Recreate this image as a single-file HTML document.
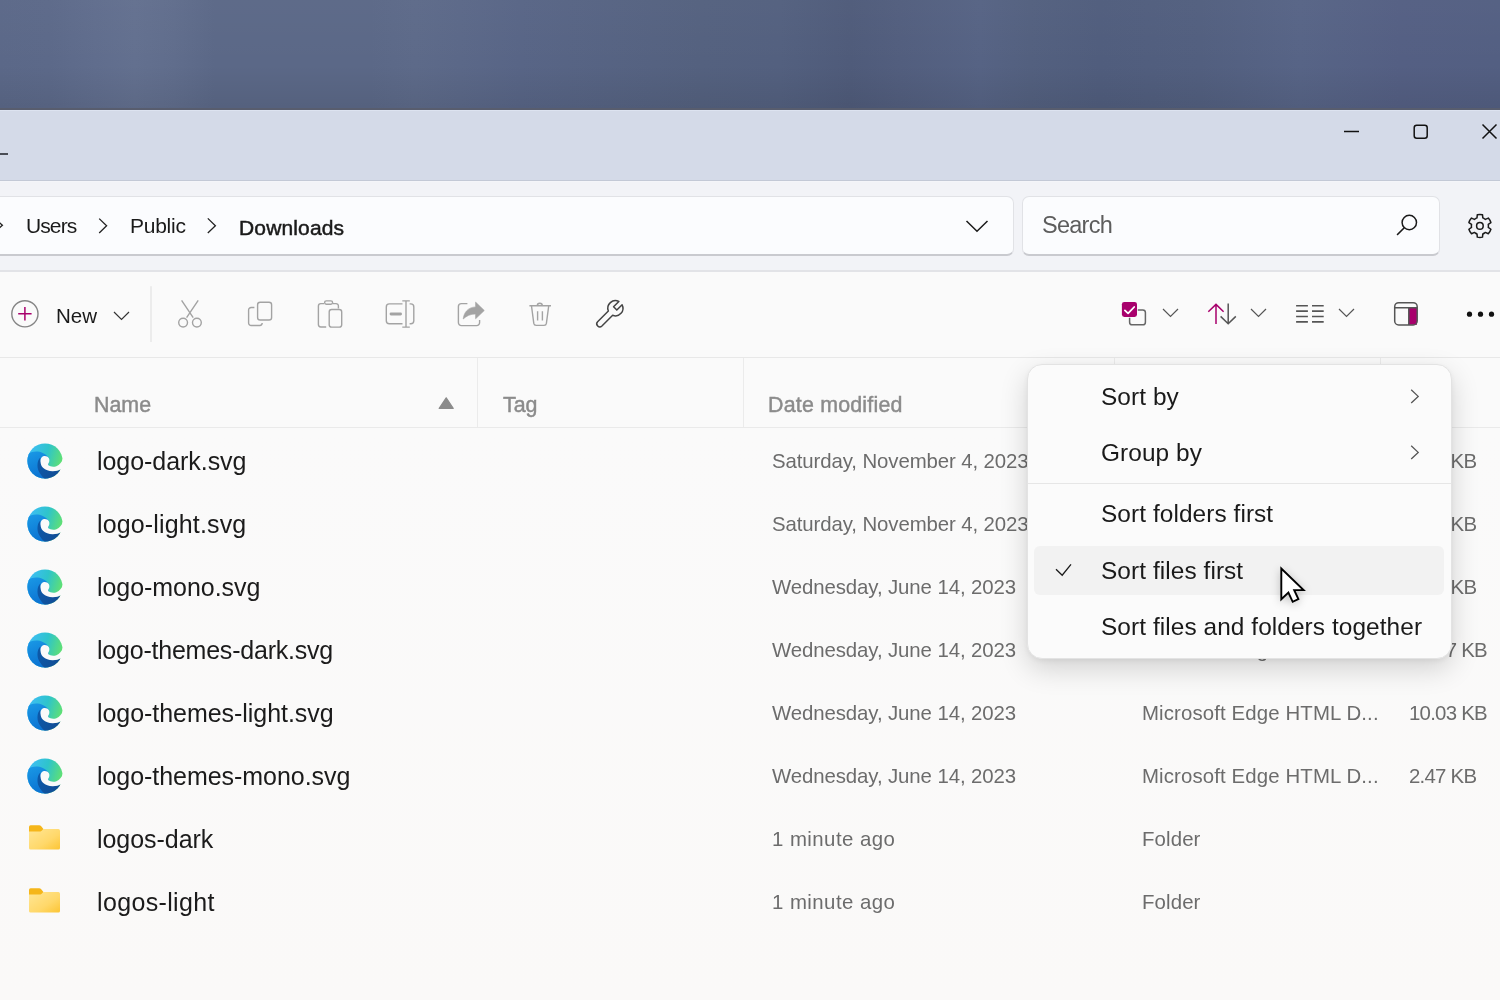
<!DOCTYPE html>
<html><head><meta charset="utf-8">
<style>
*{margin:0;padding:0;box-sizing:border-box}
html,body{width:1500px;height:1000px;overflow:hidden;background:#faf9f8;font-family:"Liberation Sans",sans-serif}
body{position:relative}
.a{position:absolute}
.t{position:absolute;white-space:nowrap;line-height:1;will-change:transform}
svg{position:absolute;overflow:visible}
#wall{left:0;top:0;width:1500px;height:108px;background:linear-gradient(90deg,#5b6888 0.00%,#5c6989 3.33%,#606d8d 6.33%,#63708f 9.00%,#606d8c 11.67%,#5b6887 14.33%,#5b6887 24.67%,#5d6a89 27.67%,#5b6888 30.67%,#586586 34.67%,#54617f 46.67%,#53607f 52.00%,#4f5b7a 56.67%,#525e7e 60.00%,#566384 65.33%,#53607f 68.67%,#505d7d 73.33%,#525f7f 80.00%,#576486 86.67%,#545f83 93.33%,#535f82 100.00%)}
#wallshade{left:0;top:0;width:1500px;height:108px;background:linear-gradient(180deg,rgba(255,255,255,0.02) 0%,rgba(0,0,0,0) 60%,rgba(0,0,0,0.07) 100%)}
#wb{left:0;top:108px;width:1500px;height:2px;background:#585d6e}
#title{left:0;top:110px;width:1500px;height:71px;background:#d4dae8;border-top:1px solid #dde3f0;border-bottom:1px solid #c3c9d6}
#addr{left:0;top:181px;width:1500px;height:91px;background:#f2f3f7;border-top:1px solid #f4f5f9;border-bottom:2px solid #e2e3e7}
#tool{left:0;top:272px;width:1500px;height:86px;background:#fafafa;border-bottom:1px solid #e8e8e8}
#head{left:0;top:358px;width:1500px;height:70px;background:#fafafa;border-bottom:1px solid #eaeaea}
#list{left:0;top:428px;width:1500px;height:572px;background:linear-gradient(180deg,#fafafa 0%,#faf9f8 100%)}
.box{background:#fbfcfe;border:1px solid #e1e2e6;border-bottom:2px solid #c9cacf;border-radius:7px}
.bc{font-size:21px;color:#1a1a1a;letter-spacing:-0.9px}
.nm{font-size:25px;color:#1b1b1b;letter-spacing:-0.05px}
.gr{font-size:20.4px;color:#6c6c6c;letter-spacing:-0.1px}
.hd{font-size:21.4px;color:#8b8b8b;-webkit-text-stroke:0.45px #8b8b8b;letter-spacing:0px}
.ty{letter-spacing:0.12px}
.mi{font-size:24.4px;color:#1a1a1a;letter-spacing:0.08px}
</style></head><body>
<div class="a" id="wall"></div>
<div class="a" id="wallshade"></div>
<div class="a" id="wb"></div>
<div class="a" id="title"></div>
<div class="a" id="addr"></div>
<div class="a" id="tool"></div>
<div class="a" id="head"></div>
<div class="a" id="list"></div>

<!-- title bar -->
<div class="a" style="left:0;top:153px;width:7.5px;height:2px;background:#4a4d55"></div>
<svg style="left:1340px;top:120px" width="160" height="24" viewBox="1340 120 160 24">
  <path d="M1344 131.5H1359" stroke="#111" stroke-width="1.5" fill="none"/>
  <rect x="1414.2" y="125.2" width="13" height="13" rx="2.5" stroke="#111" stroke-width="1.5" fill="none"/>
  <path d="M1482.5 124.5L1496.5 138.5M1496.5 124.5L1482.5 138.5" stroke="#111" stroke-width="1.5" fill="none"/>
</svg>

<!-- address box -->
<div class="a box" style="left:-10px;top:196px;width:1023.5px;height:60px"></div>
<div class="a box" style="left:1021.5px;top:196px;width:418.5px;height:60px"></div>

<!-- breadcrumb -->
<svg style="left:0;top:215px" width="20" height="20" viewBox="0 215 20 20"><path d="M-3 220.5L2.4 225.2L-3 230" stroke="#222" stroke-width="1.3" fill="none"/></svg>
<div class="t bc" style="left:25.5px;top:215.2px">Users</div>
<svg style="left:95px;top:215px" width="20" height="22" viewBox="95 215 20 22"><path d="M99.2 218.6L106.6 225.8L99.2 233" stroke="#222" stroke-width="1.3" fill="none"/></svg>
<div class="t bc" style="left:129.5px;top:215.2px;letter-spacing:-0.25px">Public</div>
<svg style="left:203px;top:215px" width="20" height="22" viewBox="203 215 20 22"><path d="M207.8 218.4L215.4 225.7L207.8 233" stroke="#222" stroke-width="1.3" fill="none"/></svg>
<div class="t bc" style="left:238.5px;top:216.8px;font-size:21px;-webkit-text-stroke:0.5px #1a1a1a;letter-spacing:0.15px">Downloads</div>
<svg style="left:960px;top:215px" width="32" height="22" viewBox="960 215 32 22"><path d="M966.5 221L977 231.3L987.5 221" stroke="#1a1a1a" stroke-width="1.5" fill="none"/></svg>
<div class="t" style="left:1041.5px;top:213.8px;font-size:23.5px;color:#5d5d5d;letter-spacing:-0.75px">Search</div>
<svg style="left:1390px;top:210px" width="30" height="30" viewBox="1390 210 30 30"><circle cx="1409.3" cy="222.5" r="7.2" stroke="#1a1a1a" stroke-width="1.5" fill="none"/><path d="M1404 228L1397.5 234.5" stroke="#1a1a1a" stroke-width="1.6" stroke-linecap="round" fill="none"/></svg>
<svg style="left:1460px;top:205px" width="40" height="40" viewBox="1460 205 40 40" id="gear"><path d="M1475.65 218.54A8.5 8.5 0 0 1 1476.99 217.91L1477.31 214.69A11.5 11.5 0 0 1 1482.49 214.69L1482.81 217.91A8.5 8.5 0 0 1 1484.15 218.54A8.5 8.5 0 0 1 1485.36 219.39L1488.31 218.06A11.5 11.5 0 0 1 1490.9 222.54L1488.27 224.42A8.5 8.5 0 0 1 1488.4 225.9A8.5 8.5 0 0 1 1488.27 227.38L1490.9 229.26A11.5 11.5 0 0 1 1488.31 233.74L1485.36 232.41A8.5 8.5 0 0 1 1484.15 233.26A8.5 8.5 0 0 1 1482.81 233.89L1482.49 237.11A11.5 11.5 0 0 1 1477.31 237.11L1476.99 233.89A8.5 8.5 0 0 1 1475.65 233.26A8.5 8.5 0 0 1 1474.44 232.41L1471.49 233.74A11.5 11.5 0 0 1 1468.9 229.26L1471.53 227.38A8.5 8.5 0 0 1 1471.4 225.9A8.5 8.5 0 0 1 1471.53 224.42L1468.9 222.54A11.5 11.5 0 0 1 1471.49 218.06L1474.44 219.39A8.5 8.5 0 0 1 1475.65 218.54Z" stroke="#1a1a1a" stroke-width="1.5" fill="none" stroke-linejoin="round"/><circle cx="1479.9" cy="225.9" r="3.3" stroke="#1a1a1a" stroke-width="1.5" fill="none"/></svg>

<!-- toolbar -->
<svg style="left:0;top:290px" width="660" height="60" viewBox="0 290 660 60">
  <circle cx="24.9" cy="313.8" r="13.1" stroke="#858585" stroke-width="1.4" fill="none"/>
  <path d="M18.2 313.8H31.6M24.9 307.1V320.6" stroke="#a8006c" stroke-width="1.5" fill="none"/>
  <path d="M114 312L121.5 319.5L129 312" stroke="#333" stroke-width="1.2" fill="none"/>
  <path d="M151 286.2V342" stroke="#e3e3e3" stroke-width="1.2"/>
  <g stroke="#a3a3a3" stroke-width="1.4" fill="none">
    <path d="M181.6 300.3L193.2 317.6M198.2 300.3L186.6 317.6"/>
    <circle cx="183.1" cy="322.6" r="4.4"/><circle cx="196.9" cy="322.6" r="4.4"/>
    <rect x="257.6" y="302.2" width="14" height="17.8" rx="2.6"/>
    <path d="M254.4 307.5H251.2A2.6 2.6 0 0 0 248.6 310.1V322.9A2.6 2.6 0 0 0 251.2 325.5H259.8A2.6 2.6 0 0 0 262.2 323"/>
    <path d="M324 303.6H320.8A2.4 2.4 0 0 0 318.4 306V324.6A2.4 2.4 0 0 0 320.8 327H326.2M333 303.6H336A2.4 2.4 0 0 1 338.4 306V308.6"/>
    <rect x="324.6" y="300.9" width="8" height="3.4" rx="1.7"/>
    <rect x="329.2" y="309.5" width="12.5" height="17.6" rx="2.4"/>
    <path d="M402.5 303.9H389.3A3 3 0 0 0 386.3 306.9V320.8A3 3 0 0 0 389.3 323.8H402.5M409.6 303.9H410.8A3 3 0 0 1 413.8 306.9V320.8A3 3 0 0 1 410.8 323.8H409.6"/>
    <path d="M406 300.9V327.1M402.3 300.9H409.8M402.3 327.1H409.8"/>
    <path d="M391 314H400.6" stroke-width="2.8" stroke-linecap="round"/>
    <path d="M467.4 303.6H461.4A3 3 0 0 0 458.4 306.6V322.6A3 3 0 0 0 461.4 325.6H476.6A3 3 0 0 0 479.6 322.6V320"/>
    <path d="M529.4 305.8H551M537.3 305.8A2.5 2.5 0 0 1 542.3 305.8M531.5 306L533.8 323.4A2.4 2.4 0 0 0 536.2 325.4H544A2.4 2.4 0 0 0 546.4 323.4L548.7 306M537.6 311.2V320.4M542.4 311.2V320.4"/>
  </g>
  <path d="M463.2 319C463.8 313 467.5 307.3 475.6 306.9V302.1L484.3 310.5L475.6 318.8V314C470.5 314 466.5 315.9 463.2 319Z" fill="#a3a3a3" stroke="#a3a3a3" stroke-width="0.6" stroke-linejoin="round"/>
  <path d="M608.36 310.98A7.55 7.55 0 0 1 618.86 301.54L613.56 306.84L616.81 310.09L622.11 304.79A7.55 7.55 0 0 1 612.67 315.29L601.93 326.03A3.05 3.05 0 0 1 597.62 321.72Z" stroke="#444" stroke-width="1.5" fill="none" stroke-linejoin="round" id="wrench"/>
</svg>
<div class="t" style="left:56px;top:305.5px;font-size:20.5px;color:#1a1a1a">New</div>

<svg style="left:1100px;top:290px" width="400" height="50" viewBox="1100 290 400 50">
  <rect x="1121.9" y="301.9" width="15.1" height="15.1" rx="2.4" fill="#a8006c"/>
  <path d="M1124.9 310.4L1128.1 313.4L1134.2 307" stroke="#fff" stroke-width="1.8" fill="none" stroke-linecap="round" stroke-linejoin="round"/>
  <path d="M1137.8 310H1142.8A2.6 2.6 0 0 1 1145.4 312.6V322.2A2.6 2.6 0 0 1 1142.8 324.8H1132.2A2.6 2.6 0 0 1 1129.6 322.2V317.8" stroke="#666" stroke-width="1.5" fill="none"/>
  <g stroke="#555" stroke-width="1.2" fill="none">
    <path d="M1163 309L1170.5 316.4L1178 309"/>
    <path d="M1251 309L1258.5 316.4L1266 309"/>
    <path d="M1339 309L1346.5 316.4L1354 309"/>
  </g>
  <path d="M1216 324V305M1208.3 311.8L1216 304.4L1223.6 311.8" stroke="#a8006c" stroke-width="1.5" fill="none"/>
  <path d="M1228.2 303.6V323M1220.6 316.4L1228.2 323.8L1235.8 316.4" stroke="#555" stroke-width="1.5" fill="none"/>
  <path d="M1296.1 305.7H1307.9M1296.1 311.1H1307.9M1296.1 316.5H1307.9M1296.1 321.9H1307.9M1312 305.7H1323.7M1312 311.1H1323.7M1312 316.5H1323.7M1312 321.9H1323.7" stroke="#555" stroke-width="1.6" fill="none"/>
  <rect x="1408.8" y="307.8" width="8.2" height="17" fill="#a8006c"/>
  <rect x="1394.7" y="302.7" width="22.5" height="22.3" rx="4" stroke="#555" stroke-width="1.5" fill="none"/>
  <path d="M1394.7 307.8H1417.2M1408.8 307.8V325" stroke="#555" stroke-width="1.5" fill="none"/>
  <circle cx="1469.5" cy="314.2" r="2.6" fill="#111"/><circle cx="1480.5" cy="314.2" r="2.6" fill="#111"/><circle cx="1491.5" cy="314.2" r="2.6" fill="#111"/>
</svg>

<!-- header -->
<div class="t hd" style="left:93.5px;top:395px">Name</div>
<svg style="left:430px;top:390px" width="30" height="25" viewBox="430 390 30 25"><path d="M439.2 408.4L446.2 397.8L453.2 408.4Z" fill="#8b8b8b" stroke="#8b8b8b" stroke-width="1.2" stroke-linejoin="round"/></svg>
<div class="t hd" style="left:502.5px;top:395px">Tag</div>
<div class="t hd" style="left:767.8px;top:395px;letter-spacing:0.2px">Date modified</div>
<div class="a" style="left:476.5px;top:358px;width:1px;height:69px;background:#ebebeb"></div>
<div class="a" style="left:742.5px;top:358px;width:1px;height:69px;background:#ebebeb"></div>
<div class="a" style="left:1113.5px;top:358px;width:1px;height:69px;background:#ebebeb"></div>
<div class="a" style="left:1379.5px;top:358px;width:1px;height:69px;background:#ebebeb"></div>


<!-- rows -->
<svg width="0" height="0" style="position:absolute"><defs>
<linearGradient id="eg1" x1="0" y1="0.3" x2="1" y2="0.6"><stop offset="0" stop-color="#40bdf8"/><stop offset="0.5" stop-color="#2ec4cb"/><stop offset="1" stop-color="#66e468"/></linearGradient>
<linearGradient id="eg2" x1="0" y1="0" x2="0.3" y2="1"><stop offset="0" stop-color="#1a9ae6"/><stop offset="1" stop-color="#0a6fd0"/></linearGradient>
<linearGradient id="eg3" x1="0" y1="0" x2="1" y2="0.4"><stop offset="0" stop-color="#0c5aab"/><stop offset="1" stop-color="#124b92"/></linearGradient>
<linearGradient id="fg1" x1="0" y1="0" x2="1" y2="1"><stop offset="0" stop-color="#ffe695"/><stop offset="0.6" stop-color="#ffd86a"/><stop offset="1" stop-color="#fcc534"/></linearGradient>
<clipPath id="ec"><circle cx="18" cy="18" r="17.6"/></clipPath>
<symbol id="edge" viewBox="0 0 36 36">
 <g clip-path="url(#ec)">
  <rect x="0" y="0" width="36" height="36" fill="url(#eg1)"/>
  <path d="M-1 12.5C4 7.5 15 6.5 21.5 14.5L21 40H-1Z" fill="url(#eg2)"/>
  <path d="M13.3 14.5C10 17.5 9.6 24 12 28.8C13.8 32.3 16.5 35 19 37L40 37V20C37 24 34 26.5 33.1 26.6C29 28.4 22 28.6 18 25.2C15 22.6 12.8 18.5 13.3 14.5Z" fill="url(#eg3)"/>
 </g>
 <path d="M17.6 13.1C15 13.1 13.4 15.5 13.5 18.4C13.6 21 14.3 23 16 24.8C18.5 27.2 22 28.3 25.9 28.25C29 28.2 31.5 27.5 33.05 26.6L40 26L40 14L35.6 16.3C34.8 19.3 32.6 21.9 29.4 23.2C26.4 24.2 23 23.6 21.4 22.3C20.9 21.6 21.3 20.6 21.9 19.6C22.8 17.6 22.4 14.8 20.6 13.8C19.7 13.3 18.6 13.1 17.6 13.1Z" fill="#fafafa"/>
</symbol>
<symbol id="folder" viewBox="0 0 32 26">
 <path d="M0 1.9A1.6 1.6 0 0 1 1.6 0.3H10.2C11 0.3 11.5 0.6 12 1.1L14.6 4.2V8H0Z" fill="#f5b61a"/>
 <path d="M0 6.4H11.5C12.1 6.4 12.6 6.1 13 5.6L14.2 4.1H29.4A1.6 1.6 0 0 1 31 5.7V22.9A1.6 1.6 0 0 1 29.4 24.5H1.6A1.6 1.6 0 0 1 0 22.9Z" fill="url(#fg1)"/>
</symbol>
</defs></svg>
<svg style="left:26.5px;top:442.5px" width="36" height="36"><use href="#edge"/></svg>
<div class="t nm" style="left:97px;top:448.65px">logo-dark.svg</div>
<div class="t gr" style="left:771.5px;top:451.20px">Saturday, November 4, 2023</div>
<div class="t gr ty" style="left:1141.8px;top:451.20px">Microsoft Edge HTML D...</div>
<div class="t gr" style="left:1409.2px;top:451.20px; letter-spacing:-0.75px">2.17 KB</div>
<svg style="left:26.5px;top:505.5px" width="36" height="36"><use href="#edge"/></svg>
<div class="t nm" style="left:97px;top:511.65px;letter-spacing:0.15px">logo-light.svg</div>
<div class="t gr" style="left:771.5px;top:514.20px">Saturday, November 4, 2023</div>
<div class="t gr ty" style="left:1141.8px;top:514.20px">Microsoft Edge HTML D...</div>
<div class="t gr" style="left:1409.2px;top:514.20px; letter-spacing:-0.75px">2.17 KB</div>
<svg style="left:26.5px;top:568.5px" width="36" height="36"><use href="#edge"/></svg>
<div class="t nm" style="left:97px;top:574.65px">logo-mono.svg</div>
<div class="t gr" style="left:771.5px;top:577.20px">Wednesday, June 14, 2023</div>
<div class="t gr ty" style="left:1141.8px;top:577.20px">Microsoft Edge HTML D...</div>
<div class="t gr" style="left:1409.2px;top:577.20px; letter-spacing:-0.75px">2.17 KB</div>
<svg style="left:26.5px;top:631.5px" width="36" height="36"><use href="#edge"/></svg>
<div class="t nm" style="left:97px;top:637.65px;letter-spacing:-0.22px">logo-themes-dark.svg</div>
<div class="t gr" style="left:771.5px;top:640.20px">Wednesday, June 14, 2023</div>
<div class="t gr ty" style="left:1141.8px;top:640.20px">Microsoft Edge HTML D...</div>
<div class="t gr" style="left:1409.2px;top:640.20px; letter-spacing:-0.75px">10.37 KB</div>
<svg style="left:26.5px;top:694.5px" width="36" height="36"><use href="#edge"/></svg>
<div class="t nm" style="left:97px;top:700.65px">logo-themes-light.svg</div>
<div class="t gr" style="left:771.5px;top:703.20px">Wednesday, June 14, 2023</div>
<div class="t gr ty" style="left:1141.8px;top:703.20px">Microsoft Edge HTML D...</div>
<div class="t gr" style="left:1409.2px;top:703.20px; letter-spacing:-0.75px">10.03 KB</div>
<svg style="left:26.5px;top:757.5px" width="36" height="36"><use href="#edge"/></svg>
<div class="t nm" style="left:97px;top:763.65px">logo-themes-mono.svg</div>
<div class="t gr" style="left:771.5px;top:766.20px">Wednesday, June 14, 2023</div>
<div class="t gr ty" style="left:1141.8px;top:766.20px">Microsoft Edge HTML D...</div>
<div class="t gr" style="left:1409.2px;top:766.20px; letter-spacing:-0.75px">2.47 KB</div>
<svg style="left:29px;top:825px" width="32" height="26" viewBox="0 0 32 26"><use href="#folder"/></svg>
<div class="t nm" style="left:97px;top:826.65px">logos-dark</div>
<div class="t gr" style="left:772.2px;top:829.20px;letter-spacing:0.45px">1 minute ago</div>
<div class="t gr ty" style="left:1141.8px;top:829.20px">Folder</div>
<svg style="left:29px;top:888px" width="32" height="26" viewBox="0 0 32 26"><use href="#folder"/></svg>
<div class="t nm" style="left:97px;top:889.65px;letter-spacing:0.35px">logos-light</div>
<div class="t gr" style="left:772.2px;top:892.20px;letter-spacing:0.45px">1 minute ago</div>
<div class="t gr ty" style="left:1141.8px;top:892.20px">Folder</div>

<!-- context menu -->
<div class="a" style="left:1026.5px;top:364px;width:425.5px;height:294.5px;border-radius:15px;background:#fbfbfb;border:1px solid #e3e3e3;box-shadow:0 10px 28px rgba(0,0,0,0.16),0 2px 6px rgba(0,0,0,0.06)"></div>
<div class="a" style="left:1027.5px;top:482.5px;width:423px;height:1.2px;background:#e6e6e6"></div>
<div class="a" style="left:1034px;top:546px;width:410px;height:48.5px;border-radius:6px;background:#f2f2f2"></div>
<div class="t mi" style="left:1101.2px;top:385px">Sort by</div>
<div class="t mi" style="left:1101.2px;top:441.4px">Group by</div>
<div class="t mi" style="left:1101.2px;top:502.3px">Sort folders first</div>
<div class="t mi" style="left:1101.2px;top:558.6px">Sort files first</div>
<div class="t mi" style="left:1101.2px;top:615.2px">Sort files and folders together</div>
<svg style="left:1400px;top:380px" width="30" height="90" viewBox="1400 380 30 90"><path d="M1411.2 389.8L1418.2 396.4L1411.2 403M1411.2 445.8L1418.2 452.4L1411.2 459" stroke="#555" stroke-width="1.3" fill="none"/></svg>
<svg style="left:1050px;top:560px" width="30" height="20" viewBox="1050 560 30 20"><path d="M1056 569.2L1062.2 575.2L1071 564.4" stroke="#1a1a1a" stroke-width="1.3" fill="none"/></svg>
<!-- cursor -->
<svg style="left:1270px;top:560px;filter:drop-shadow(0 2px 4px rgba(0,0,0,0.22))" width="50" height="50" viewBox="1270 560 50 50"><path d="M1281.3 568.5V599.3L1288.4 592.6L1292.7 601.8L1298.4 599.1L1294.2 590.1H1303.6Z" fill="#fff" stroke="#000" stroke-width="1.9" stroke-linejoin="miter"/></svg>

</body></html>
